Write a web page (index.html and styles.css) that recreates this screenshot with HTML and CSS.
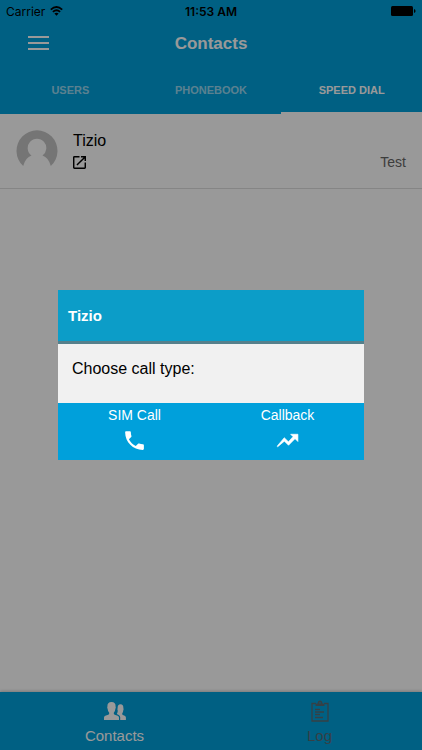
FILE: index.html
```html
<!DOCTYPE html>
<html lang="en">
<head>
<meta charset="utf-8">
<meta name="viewport" content="width=device-width, initial-scale=1">
<title>Contacts</title>
<link rel="stylesheet" href="styles.css">
</head>
<body>
<div class="app">
  <header class="header">
    <div class="status">
      <span class="carrier">Carrier
        <svg width="13" height="10" viewBox="0 0 13 10" fill="none" stroke="#000" stroke-width="1.8" aria-hidden="true"><path d="M.8 3.6Q6.5-1.6 12.2 3.600M2.900 5.900Q6.500 2.600 10.100 5.900"/><path d="M4.400 7.500Q6.500 5.800 8.600 7.500L6.500 9.700Z" fill="#000" stroke="none"/></svg>
      </span>
      <span class="time">11:53 AM</span>
      <svg class="battery" width="25" height="10" viewBox="0 0 25 10" aria-hidden="true"><rect width="22" height="10" rx="1.5"/><path d="M23 3q1.6.4 1.6 2T23 7z"/></svg>
    </div>
    <div class="toolbar">
      <button class="menu" type="button" aria-label="Menu">
        <svg width="21" height="16" viewBox="0 0 21 16" fill="#fff"><path d="M0 0h21v2H0zM0 6h21v2H0zM0 12h21v2H0z"/></svg>
      </button>
      <h1 class="title">Contacts</h1>
    </div>
    <nav class="tabs">
      <a class="tab" href="#users">USERS</a>
      <a class="tab" href="#phonebook">PHONEBOOK</a>
      <a class="tab active" href="#speed-dial">SPEED DIAL</a>
    </nav>
  </header>
  <main class="list">
    <div class="row">
      <svg class="avatar" width="42" height="42" viewBox="0 0 42 42" aria-hidden="true"><path fill="#c4c4c4" d="M7.200 36A20.500 20.500 0 1 1 34.800 36Q32.500 27.500 26.500 25.500A9.300 9.300 0 1 0 15.500 25.500Q9.500 27.500 7.200 36Z"/></svg>
      <div class="person">
        <span class="name">Tizio</span>
        <svg width="13" height="13" viewBox="3 3 18 18" aria-hidden="true"><path d="M19 19H5V5h7V3H5a2 2 0 0 0-2 2v14a2 2 0 0 0 2 2h14a2 2 0 0 0 2-2v-7h-2v7zM14 3v2h3.590l-9.830 9.830 1.410 1.410L19 6.410V10h2V3h-7z"/></svg>
      </div>
      <span class="label">Test</span>
    </div>
  </main>
  <nav class="bottom">
    <a class="item" href="#contacts">
      <svg width="22" height="22" viewBox="0 0 22 22" fill="#fff" aria-hidden="true"><path d="M0 20v-2.500q0-1.300 1.300-1.800l3-1q1.200-.5.9-2Q3.700 11 3.600 8.800q-.7-1-.2-2.300Q3.200 2 7.500 2t4.100 4.500q.5 1.300-.2 2.300-.1 2.200-1.600 3.900-.3 1.500.9 2l3 1q1.300.5 1.300 1.800V20z"/><path d="M16.200 20v-2.800q0-1.600-1.500-2.300l-1.900-.8q1.200-1.700.9-3.900-.6-.9-.1-1.900-.1-4.100 2.900-4.100t2.900 4.100q.5 1-.1 1.900-.1 1.800-1.100 3.200-.1 1.200.7 1.600l1.800.8q1.200.5 1.200 1.700V20z"/></svg>
      <span>Contacts</span>
    </a>
    <a class="item muted" href="#log">
      <svg width="18" height="22" viewBox="0 0 18 22" fill="none" stroke="currentColor" stroke-width="1.300" aria-hidden="true"><path d="M5 3.500H1V21h16V3.500h-4M4 9.500h5M4 12h9M4 14.500h5M4 17.500h8"/><path fill="currentColor" fill-rule="evenodd" stroke="none" d="M4.500 6V4.500q.3-1 2-1Q6.800.5 9 .5t2.500 3q1.700 0 2 1V6zM8.300 3.500h1.400V2.200H8.300z"/></svg>
      <span>Log</span>
    </a>
  </nav>
</div>
<div class="backdrop">
  <section class="dialog" role="dialog" aria-labelledby="dialog-title">
    <h2 class="dialog-title" id="dialog-title">Tizio</h2>
    <p class="message">Choose call type:</p>
    <div class="actions">
      <button class="action" type="button">
        <span>SIM Call</span>
        <svg width="25" height="25" viewBox="0 0 24 24" fill="#fff" aria-hidden="true"><path d="M6.620 10.790c1.440 2.830 3.760 5.140 6.590 6.590l2.200-2.200c.27-.27.67-.36 1.020-.24 1.120.37 2.330.57 3.570.57.55 0 1 .45 1 1V20c0 .55-.45 1-1 1-9.390 0-17-7.610-17-17 0-.55.45-1 1-1h3.500c.55 0 1 .45 1 1 0 1.250.2 2.450.57 3.570.11.35.03.74-.25 1.020l-2.200 2.200z"/></svg>
      </button>
      <button class="action" type="button">
        <span>Callback</span>
        <svg width="25" height="25" viewBox="0 0 24 24" fill="#fff" stroke="#fff" stroke-width=".6" aria-hidden="true"><path d="M15 6l2.300 2.300-4.400 5-4-4L2 17.500l.6.5L9 12.600l4 4 6.200-6.400L22 13V6z"/></svg>
      </button>
    </div>
  </section>
</div>
</body>
</html>
```
FILE: styles.css
```css
* {
  box-sizing: border-box;
}

body {
  margin: 0;
  background: #fff;
  color: #000;
  font-family: "Liberation Sans", Arial, sans-serif;
}

a {
  color: inherit;
  text-decoration: none;
}

button {
  padding: 0;
  border: 0;
  background: none;
  color: inherit;
  font: inherit;
}

svg {
  display: block;
}

.app {
  display: flex;
  flex-direction: column;
  min-height: 100vh;
}

.header {
  background: #00a0db;
  color: #fff;
}

.status {
  display: grid;
  grid-template-columns: 1fr auto 1fr;
  align-items: center;
  height: 22px;
  padding: 0 6px;
  color: #000;
  font-family: Inter, sans-serif;
  font-size: 12px;
}

.carrier {
  display: flex;
  align-items: center;
  gap: 5px;
}

.time {
  font-weight: 600;
}

.battery {
  justify-self: end;
}

.toolbar {
  display: grid;
  grid-template-columns: 1fr auto 1fr;
  align-items: center;
  height: 43px;
  padding: 0 28px;
}

.menu {
  justify-self: start;
}

.title {
  margin: 0;
  font-size: 17px;
}

.tabs {
  display: grid;
  grid-template-columns: repeat(3, 1fr);
  height: 49px;
}

.tab {
  display: flex;
  align-items: center;
  justify-content: center;
  padding-top: 2px;
  border-bottom: 2px solid transparent;
  color: rgba(255, 255, 255, 0.6);
  font-size: 11px;
  font-weight: 700;
}

.tab.active {
  border-color: #fff;
  color: #fff;
}

.list {
  flex: 1;
}

.row {
  display: flex;
  align-items: flex-start;
  gap: 15px;
  padding: 16px;
  border-bottom: 1px solid #dedede;
}

.person {
  display: grid;
  flex: 1;
  gap: 4px;
}

.name {
  font-size: 16px;
  line-height: 22px;
}

.label {
  align-self: flex-end;
  color: #666;
  font-size: 14px;
  line-height: 20px;
}

.bottom {
  display: grid;
  grid-template-columns: 1fr 1fr;
  height: 58px;
  padding-left: 12px;
  background: #00a0db;
  box-shadow: 0 -1px 3px rgba(0, 0, 0, 0.2);
  color: #fff;
  font-size: 15px;
}

.item {
  display: flex;
  flex-direction: column;
  align-items: center;
  justify-content: space-between;
  padding: 8px 0 6px;
}

.muted {
  color: #5a6b74;
}

.backdrop {
  position: fixed;
  inset: 0;
  display: grid;
  align-items: center;
  padding: 0 58px;
  background: rgba(0, 0, 0, 0.4);
}

.dialog-title {
  margin: 0;
  padding: 16px 10px;
  border-bottom: 3px solid #55808c;
  background: #0c9dc8;
  color: #fff;
  font-size: 15px;
  line-height: 19px;
}

.message {
  margin: 0;
  padding: 15px 14px 24px;
  background: #f1f1f1;
  font-size: 16px;
  line-height: 20px;
}

.actions {
  display: grid;
  grid-template-columns: 1fr 1fr;
  background: #00a0db;
  color: #fff;
  font-size: 14px;
}

.action {
  display: flex;
  flex-direction: column;
  align-items: center;
  gap: 5px;
  padding: 4px 0 7px;
}
```
